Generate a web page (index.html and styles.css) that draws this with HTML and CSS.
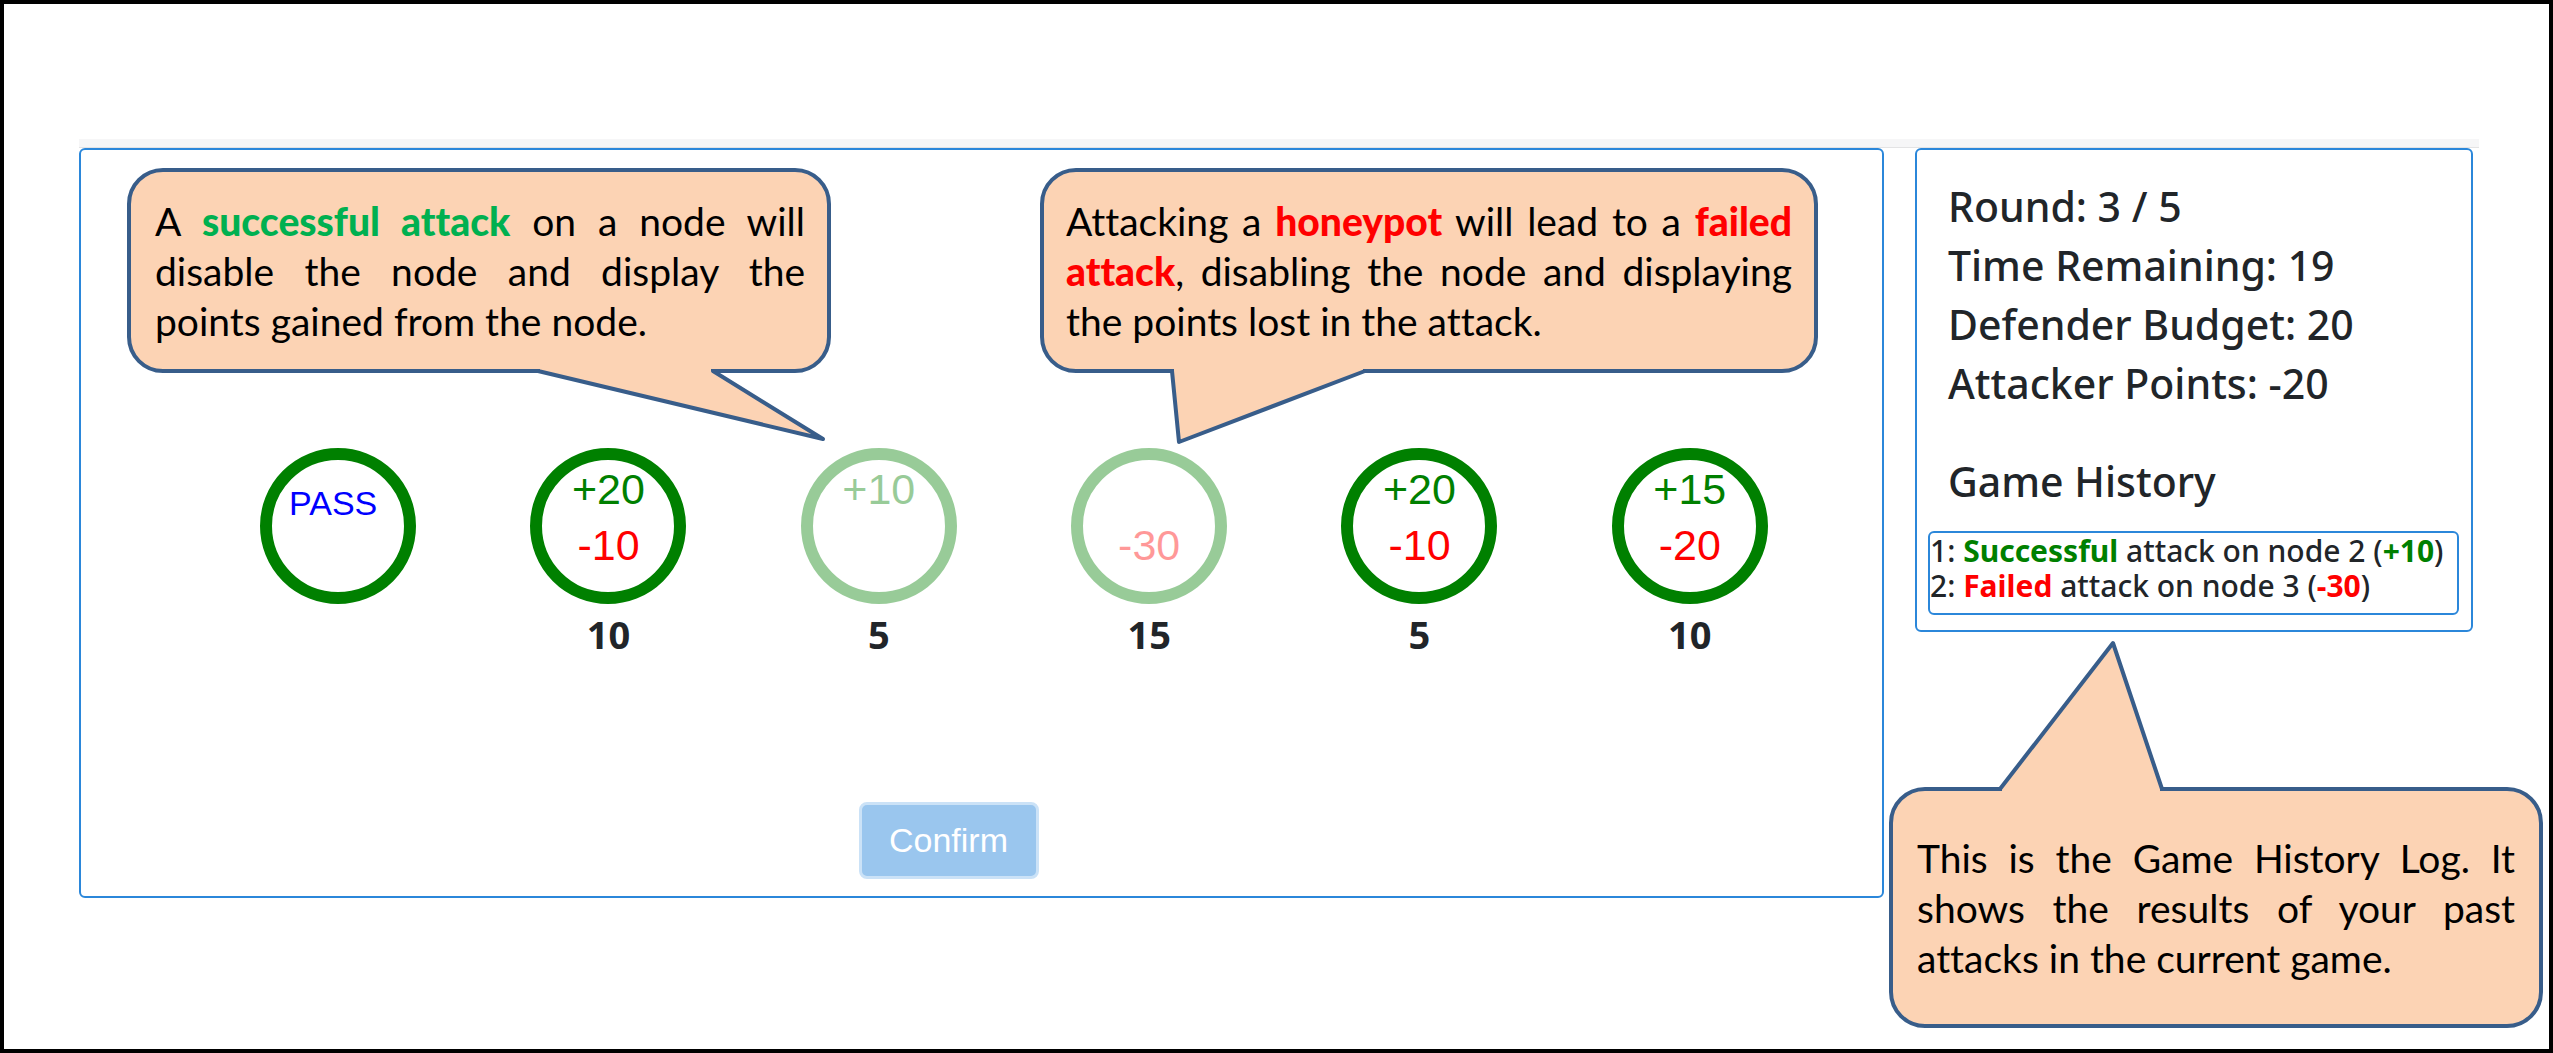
FILE: index.html
```html
<!DOCTYPE html>
<html lang="en">
<head>
<meta charset="utf-8">
<title>Game History Tutorial</title>
<link rel="stylesheet" href="styles.css">
</head>
<body>
<div class="page">
  <div class="topbar"></div>
  <div class="layout">
    <main class="panel board">
      <div class="nodes">
        <div class="node"><button class="ring pass" type="button">PASS</button></div>
        <div class="node"><button class="ring" type="button"><span class="gain">+20</span><span class="loss">-10</span></button><strong class="cost">10</strong></div>
        <div class="node"><button class="ring" type="button" disabled><span class="gain">+10</span></button><strong class="cost">5</strong></div>
        <div class="node"><button class="ring only-loss" type="button" disabled><span class="loss">-30</span></button><strong class="cost">15</strong></div>
        <div class="node"><button class="ring" type="button"><span class="gain">+20</span><span class="loss">-10</span></button><strong class="cost">5</strong></div>
        <div class="node"><button class="ring" type="button"><span class="gain">+15</span><span class="loss">-20</span></button><strong class="cost">10</strong></div>
      </div>
      <button class="confirm" type="button" disabled>Confirm</button>

      <div class="callout callout-success">
        <svg class="tail" width="300" height="80" viewBox="0 0 300 80" aria-hidden="true"><path d="M7 -3 V2 L292 70 L182 2 V-3"/></svg>
        <p>A <b class="good">successful attack</b> on a node will disable the node and display the points gained from the node.</p>
      </div>
      <div class="callout callout-failure">
        <svg class="tail" width="210" height="80" viewBox="0 0 210 80" aria-hidden="true"><path d="M8 -3 V2 L15 73 L201 2 V-3"/></svg>
        <p>Attacking a <b class="bad">honeypot</b> will lead to a <b class="bad">failed attack</b>, disabling the node and displaying the points lost in the attack.</p>
      </div>
    </main>

    <aside class="panel sidebar">
      <div class="stats">
        <div>Round: 3 / 5</div>
        <div>Time Remaining: 19</div>
        <div>Defender Budget: 20</div>
        <div>Attacker Points: -20</div>
      </div>
      <h2>Game History</h2>
      <div class="history">
        <div>1: <b class="win">Successful</b> attack on node 2 (<b class="win">+10</b>)</div>
        <div>2: <b class="bad">Failed</b> attack on node 3 (<b class="bad">-30</b>)</div>
      </div>

      <div class="callout callout-history">
        <svg class="tail" width="180" height="152" viewBox="0 0 180 152" aria-hidden="true"><path d="M9 155 V150 L122 4 L171 150 V155"/></svg>
        <p>This is the Game History Log. It shows the results of your past attacks in the current game.</p>
      </div>
    </aside>
  </div>
</div>
</body>
</html>
```
FILE: styles.css
```css
* {
  box-sizing: border-box;
}

body {
  margin: 0;
  background: #fff;
  color: #212529;
  font-family: "Noto Sans", "Open Sans", sans-serif;
}

.page {
  min-height: 100vh;
  border: 4px solid #000;
  padding: 135px 70px 0 75px;
}

.topbar {
  height: 9px;
  background: #f6f6f7;
  border-bottom: 1px solid #e3e3e4;
}

.layout {
  display: grid;
  grid-template-columns: 1805fr 558fr;
  gap: 31px;
  align-items: start;
  padding-right: 6px;
}

.panel {
  position: relative;
  background: #fff;
  border: 2px solid #2b87da;
  border-radius: 6px;
}

/* Board */
.board {
  display: flex;
  flex-direction: column;
  align-items: center;
  padding: 298px 0 17px;
}

.nodes {
  width: 100%;
  display: grid;
  grid-template-columns: repeat(6, 1fr);
  padding: 0 57px 0 122px;
  margin-bottom: 138px;
}

.node {
  display: flex;
  flex-direction: column;
  align-items: center;
}

.ring {
  display: flex;
  flex-direction: column;
  align-items: center;
  width: 156px;
  height: 156px;
  padding: 1px 0 0;
  border: 12px solid #008000;
  border-radius: 50%;
  background: #fff;
  font: 43px/56px "Liberation Sans", Arial, sans-serif;
}

.ring:disabled {
  opacity: 0.4;
}

.pass {
  padding: 15px 10px 0 0;
  color: #00f;
  font-size: 34px;
}

.only-loss {
  padding-top: 57px;
}

.gain {
  color: #008000;
}

.loss,
.bad {
  color: #f00;
}

.cost {
  font-size: 38px;
  line-height: 60px;
}

.confirm {
  width: 180px;
  height: 77px;
  margin-right: 66px;
  padding: 0;
  border: 3px solid #cbe2f7;
  border-radius: 8px;
  background: #9ac6ee;
  color: #fff;
  font: 34px "Liberation Sans", Arial, sans-serif;
}

/* Sidebar */
.sidebar {
  padding: 27px 12px 15px 11px;
}

.stats {
  padding-left: 20px;
  font-size: 41px;
  font-weight: 500;
  line-height: 59px;
}

h2 {
  margin: 38px 0 20px;
  padding-left: 20px;
  font-size: 41px;
  font-weight: 500;
  line-height: 60px;
}

.history {
  min-height: 84px;
  border: 2px solid #2b87da;
  border-radius: 6px;
  font-size: 30px;
  line-height: 35px;
  font-weight: 500;
  white-space: nowrap;
}

.win {
  color: #008000;
}

.good {
  color: #00b050;
}

/* Callouts */
.callout {
  position: absolute;
  display: flex;
  align-items: center;
  border: 4px solid #385d8a;
  border-radius: 36px;
  background: #fcd3b4;
  color: #000;
  font: 39px/50px "Gill Sans MT", Lato, sans-serif;
  font-variant-ligatures: none;
  text-align: justify;
}

.callout p {
  margin: 0;
}

.callout b {
  font-weight: 900;
}

.callout-success {
  left: 46px;
  top: 18px;
  width: 704px;
  height: 205px;
  padding: 0 22px 0 24px;
}

.callout-failure {
  left: 959px;
  top: 18px;
  width: 778px;
  height: 205px;
  padding: 0 22px;
}

.callout-history {
  left: -28px;
  top: 637px;
  width: 654px;
  height: 241px;
  padding: 0 24px;
}

.tail {
  position: absolute;
  fill: #fcd3b4;
  stroke: #385d8a;
  stroke-width: 4;
  stroke-linejoin: round;
}

.callout-success .tail {
  left: 400px;
  top: 197px;
}

.callout-failure .tail {
  left: 120px;
  top: 197px;
}

.callout-history .tail {
  left: 98px;
  top: -152px;
}
```
